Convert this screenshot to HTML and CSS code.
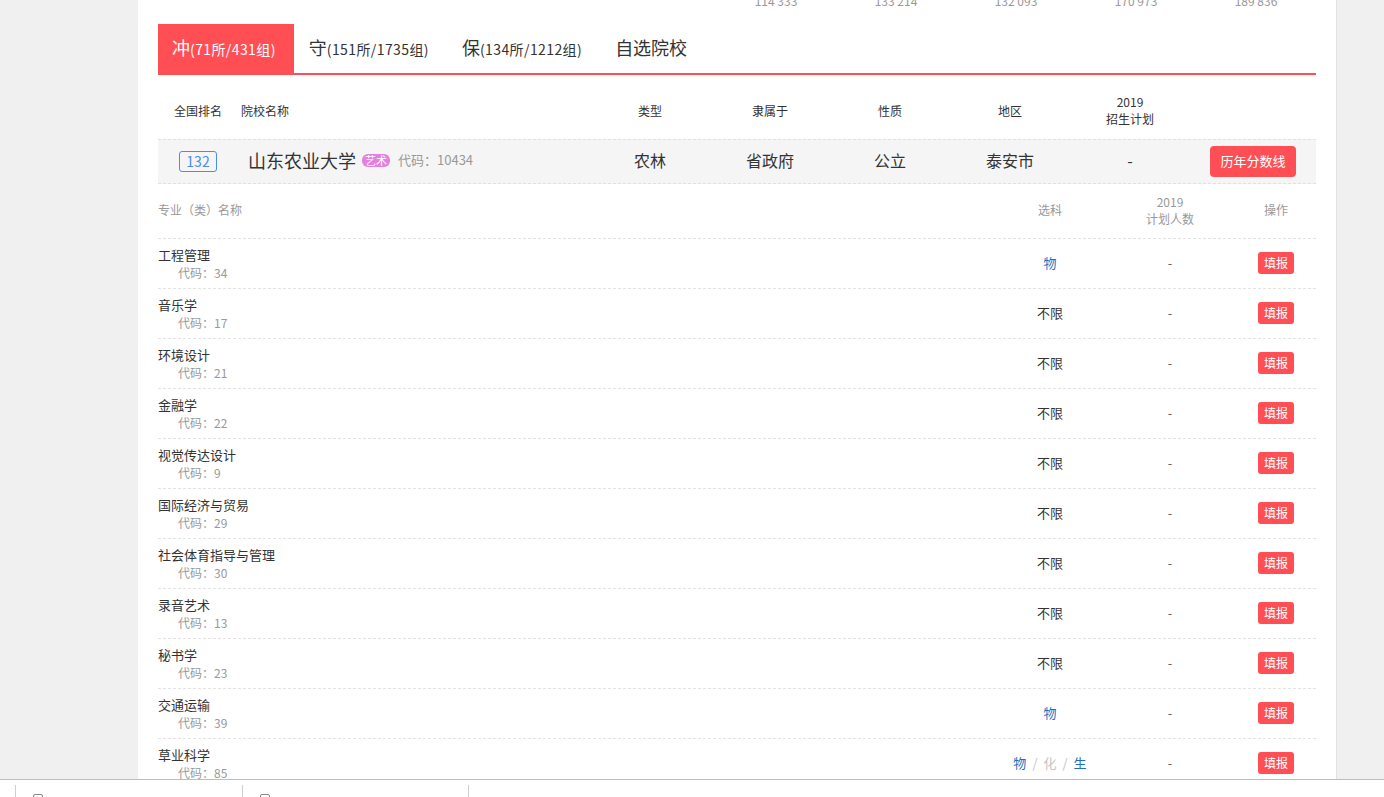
FILE: index.html
```html
<!DOCTYPE html>
<html lang="zh-CN">
<head>
<meta charset="utf-8">
<title>院校列表</title>
<link rel="stylesheet" href="styles.css">
</head>
<body>
<div class="page">
  <div class="stats">
    <span>114 333</span><span>133 214</span><span>132 093</span><span>170 973</span><span>189 836</span>
  </div>

  <div class="tabs">
    <div class="tab active"><span class="big">冲</span><span class="small">(71所/431组)</span></div>
    <div class="tab"><span class="big">守</span><span class="small">(151所/1735组)</span></div>
    <div class="tab"><span class="big">保</span><span class="small">(134所/1212组)</span></div>
    <div class="tab"><span class="big">自选院校</span></div>
  </div>

  <div class="school-grid school-head">
    <div class="c-center">全国排名</div>
    <div class="c-name-h">院校名称</div>
    <div class="c-center">类型</div>
    <div class="c-center">隶属于</div>
    <div class="c-center">性质</div>
    <div class="c-center">地区</div>
    <div class="c-center two">2019<br>招生计划</div>
    <div></div>
  </div>

  <div class="school-grid school-row">
    <div class="c-center"><span class="rank">132</span></div>
    <div class="c-name">
      <span class="sname">山东农业大学</span>
      <span class="tag">艺术</span>
      <span class="scode">代码：10434</span>
    </div>
    <div class="c-center">农林</div>
    <div class="c-center">省政府</div>
    <div class="c-center">公立</div>
    <div class="c-center">泰安市</div>
    <div class="c-center">-</div>
    <div class="c-flex"><span class="btn-history">历年分数线</span></div>
  </div>

  <div class="major-grid major-head">
    <div>专业（类）名称</div>
    <div class="c-center">选科</div>
    <div class="c-center two">2019<br>计划人数</div>
    <div class="c-center op">操作</div>
  </div>

  <div class="major-grid major-row">
    <div class="m-name"><div class="mn">工程管理</div><div class="mc">代码：34</div></div>
    <div class="c-flex subj"><span class="on">物</span></div>
    <div class="c-flex dash">-</div>
    <div class="c-flex op"><span class="btn-fill">填报</span></div>
  </div>
  <div class="major-grid major-row">
    <div class="m-name"><div class="mn">音乐学</div><div class="mc">代码：17</div></div>
    <div class="c-flex subj">不限</div>
    <div class="c-flex dash">-</div>
    <div class="c-flex op"><span class="btn-fill">填报</span></div>
  </div>
  <div class="major-grid major-row">
    <div class="m-name"><div class="mn">环境设计</div><div class="mc">代码：21</div></div>
    <div class="c-flex subj">不限</div>
    <div class="c-flex dash">-</div>
    <div class="c-flex op"><span class="btn-fill">填报</span></div>
  </div>
  <div class="major-grid major-row">
    <div class="m-name"><div class="mn">金融学</div><div class="mc">代码：22</div></div>
    <div class="c-flex subj">不限</div>
    <div class="c-flex dash">-</div>
    <div class="c-flex op"><span class="btn-fill">填报</span></div>
  </div>
  <div class="major-grid major-row">
    <div class="m-name"><div class="mn">视觉传达设计</div><div class="mc">代码：9</div></div>
    <div class="c-flex subj">不限</div>
    <div class="c-flex dash">-</div>
    <div class="c-flex op"><span class="btn-fill">填报</span></div>
  </div>
  <div class="major-grid major-row">
    <div class="m-name"><div class="mn">国际经济与贸易</div><div class="mc">代码：29</div></div>
    <div class="c-flex subj">不限</div>
    <div class="c-flex dash">-</div>
    <div class="c-flex op"><span class="btn-fill">填报</span></div>
  </div>
  <div class="major-grid major-row">
    <div class="m-name"><div class="mn">社会体育指导与管理</div><div class="mc">代码：30</div></div>
    <div class="c-flex subj">不限</div>
    <div class="c-flex dash">-</div>
    <div class="c-flex op"><span class="btn-fill">填报</span></div>
  </div>
  <div class="major-grid major-row">
    <div class="m-name"><div class="mn">录音艺术</div><div class="mc">代码：13</div></div>
    <div class="c-flex subj">不限</div>
    <div class="c-flex dash">-</div>
    <div class="c-flex op"><span class="btn-fill">填报</span></div>
  </div>
  <div class="major-grid major-row">
    <div class="m-name"><div class="mn">秘书学</div><div class="mc">代码：23</div></div>
    <div class="c-flex subj">不限</div>
    <div class="c-flex dash">-</div>
    <div class="c-flex op"><span class="btn-fill">填报</span></div>
  </div>
  <div class="major-grid major-row">
    <div class="m-name"><div class="mn">交通运输</div><div class="mc">代码：39</div></div>
    <div class="c-flex subj"><span class="on">物</span></div>
    <div class="c-flex dash">-</div>
    <div class="c-flex op"><span class="btn-fill">填报</span></div>
  </div>
  <div class="major-grid major-row">
    <div class="m-name"><div class="mn">草业科学</div><div class="mc">代码：85</div></div>
    <div class="c-flex subj"><span class="on">物</span><span class="sep">/</span><span class="off">化</span><span class="sep">/</span><span class="on">生</span></div>
    <div class="c-flex dash">-</div>
    <div class="c-flex op"><span class="btn-fill">填报</span></div>
  </div>
</div>

<div class="shelf">
  <div class="shelf-item"><span class="file-ico"></span></div>
  <div class="shelf-item"><span class="file-ico"></span></div>
</div>
</body>
</html>
```

FILE: styles.css
```css
html, body {
  margin: 0;
  padding: 0;
}
body {
  background: #f0f0f0;
  font-family: "Noto Sans CJK SC", "Microsoft YaHei", sans-serif;
  color: #333;
  overflow: hidden;
}
.page {
  margin-left: 138px;
  width: 1158px;
  padding: 0 20px 40px;
  background: #fff;
  border-right: 1px solid #e2e2e2;
  min-height: 820px;
  margin-top: -7px;
}

/* top stats */
.stats {
  display: flex;
  justify-content: flex-end;
  font-size: 12px;
  line-height: 16px;
  color: #999;
}
.stats span {
  width: 120px;
  text-align: center;
}

/* tabs */
.tabs {
  margin-top: 15px;
  display: flex;
  border-bottom: 2px solid #ff4f55;
  height: 49px;
}
.tab {
  padding: 0 18px 0 15px;
  height: 49px;
  line-height: 46px;
  font-size: 14px;
  color: #333;
  white-space: nowrap;
}
.tab .big {
  font-size: 18px;
}
.tab .small {
  letter-spacing: 0.4px;
}
.tab.active {
  background: #ff4f55;
  color: #fff;
  padding-left: 14px;
}

/* school table */
.school-grid {
  display: grid;
  grid-template-columns: 80px 352px repeat(5, 120px) 1fr;
  align-items: center;
}
.c-center {
  text-align: center;
}
.c-flex {
  display: flex;
  justify-content: center;
  align-items: center;
}
.two {
  line-height: 17px;
}
.school-head {
  margin-top: 10px;
  height: 54px;
  box-sizing: border-box;
  padding-bottom: 4px;
  font-size: 12px;
  line-height: 17px;
  color: #333;
}
.c-name-h {
  padding-left: 3px;
}
.school-row {
  height: 43px;
  box-sizing: content-box;
  background: #f5f5f5;
  border-top: 1px dashed #e0e0e0;
  border-bottom: 1px dashed #e0e0e0;
  font-size: 16px;
  line-height: 22px;
  color: #333;
}
.school-row .c-center {
  padding-bottom: 3px;
}
.rank {
  display: inline-block;
  box-sizing: border-box;
  width: 38px;
  height: 21px;
  line-height: 19px;
  border: 1px solid #4b8bf4;
  border-radius: 3px;
  color: #4b8bf4;
  font-size: 14px;
  vertical-align: middle;
}
.c-name {
  padding-left: 10px;
  padding-bottom: 3px;
  display: flex;
  align-items: center;
  white-space: nowrap;
}
.sname {
  font-size: 18px;
  line-height: 24px;
}
.tag {
  margin-left: 6px;
  background: #e57fe0;
  color: #fff;
  font-size: 11px;
  line-height: 13px;
  padding: 0 3px;
  border-radius: 6px;
}
.scode {
  margin-left: 8px;
  font-size: 13px;
  color: #999;
}
.btn-history {
  display: block;
  width: 86px;
  height: 31px;
  line-height: 30px;
  text-align: center;
  background: #ff4f55;
  color: #fff;
  font-size: 13px;
  border-radius: 4px;
}

/* majors */
.major-grid {
  display: grid;
  grid-template-columns: 832px 120px 120px 1fr;
  align-items: center;
  border-bottom: 1px dashed #e3e3e3;
}
.major-head {
  height: 55px;
  box-sizing: border-box;
  padding-bottom: 3px;
  font-size: 12px;
  line-height: 17px;
  color: #999;
}
.op {
  padding-left: 6px;
}
.major-row {
  padding: 7px 0 6px;
  height: 36px;
}
.m-name {
  margin-top: -1px;
}
.mn {
  font-size: 13px;
  line-height: 18px;
  color: #333;
}
.mc {
  font-size: 12px;
  line-height: 18px;
  color: #999;
  padding-left: 20px;
}
.subj {
  font-size: 13px;
  line-height: 18px;
  color: #333;
  padding-bottom: 3px;
}
.subj .on {
  color: #1f6fbf;
}
.subj .off {
  color: #c4c4c4;
}
.subj .sep {
  color: #c4c4c4;
  margin: 0 6px;
}
.dash {
  font-size: 13px;
  line-height: 18px;
  color: #666;
  padding-bottom: 3px;
}
.btn-fill {
  display: block;
  width: 36px;
  height: 22px;
  line-height: 21px;
  text-align: center;
  background: #ff4f55;
  color: #fff;
  font-size: 12px;
  border-radius: 3px;
}
.major-row .op {
  padding-bottom: 2px;
}

/* bottom shelf overlay */
.shelf {
  position: fixed;
  left: 0;
  right: 0;
  top: 779px;
  height: 40px;
  background: #fff;
  border-top: 1px solid #bdbdbd;
  display: flex;
  padding-left: 15px;
}
.shelf-item {
  box-sizing: border-box;
  width: 227px;
  border-left: 1px solid #cfcfcf;
  margin-top: 5px;
  padding-left: 17px;
}
.shelf-item:last-child {
  border-right: 1px solid #cfcfcf;
}
.file-ico {
  display: block;
  width: 8px;
  height: 10px;
  margin-top: 9px;
  border: 1px solid #888;
  border-radius: 2px;
}
```
